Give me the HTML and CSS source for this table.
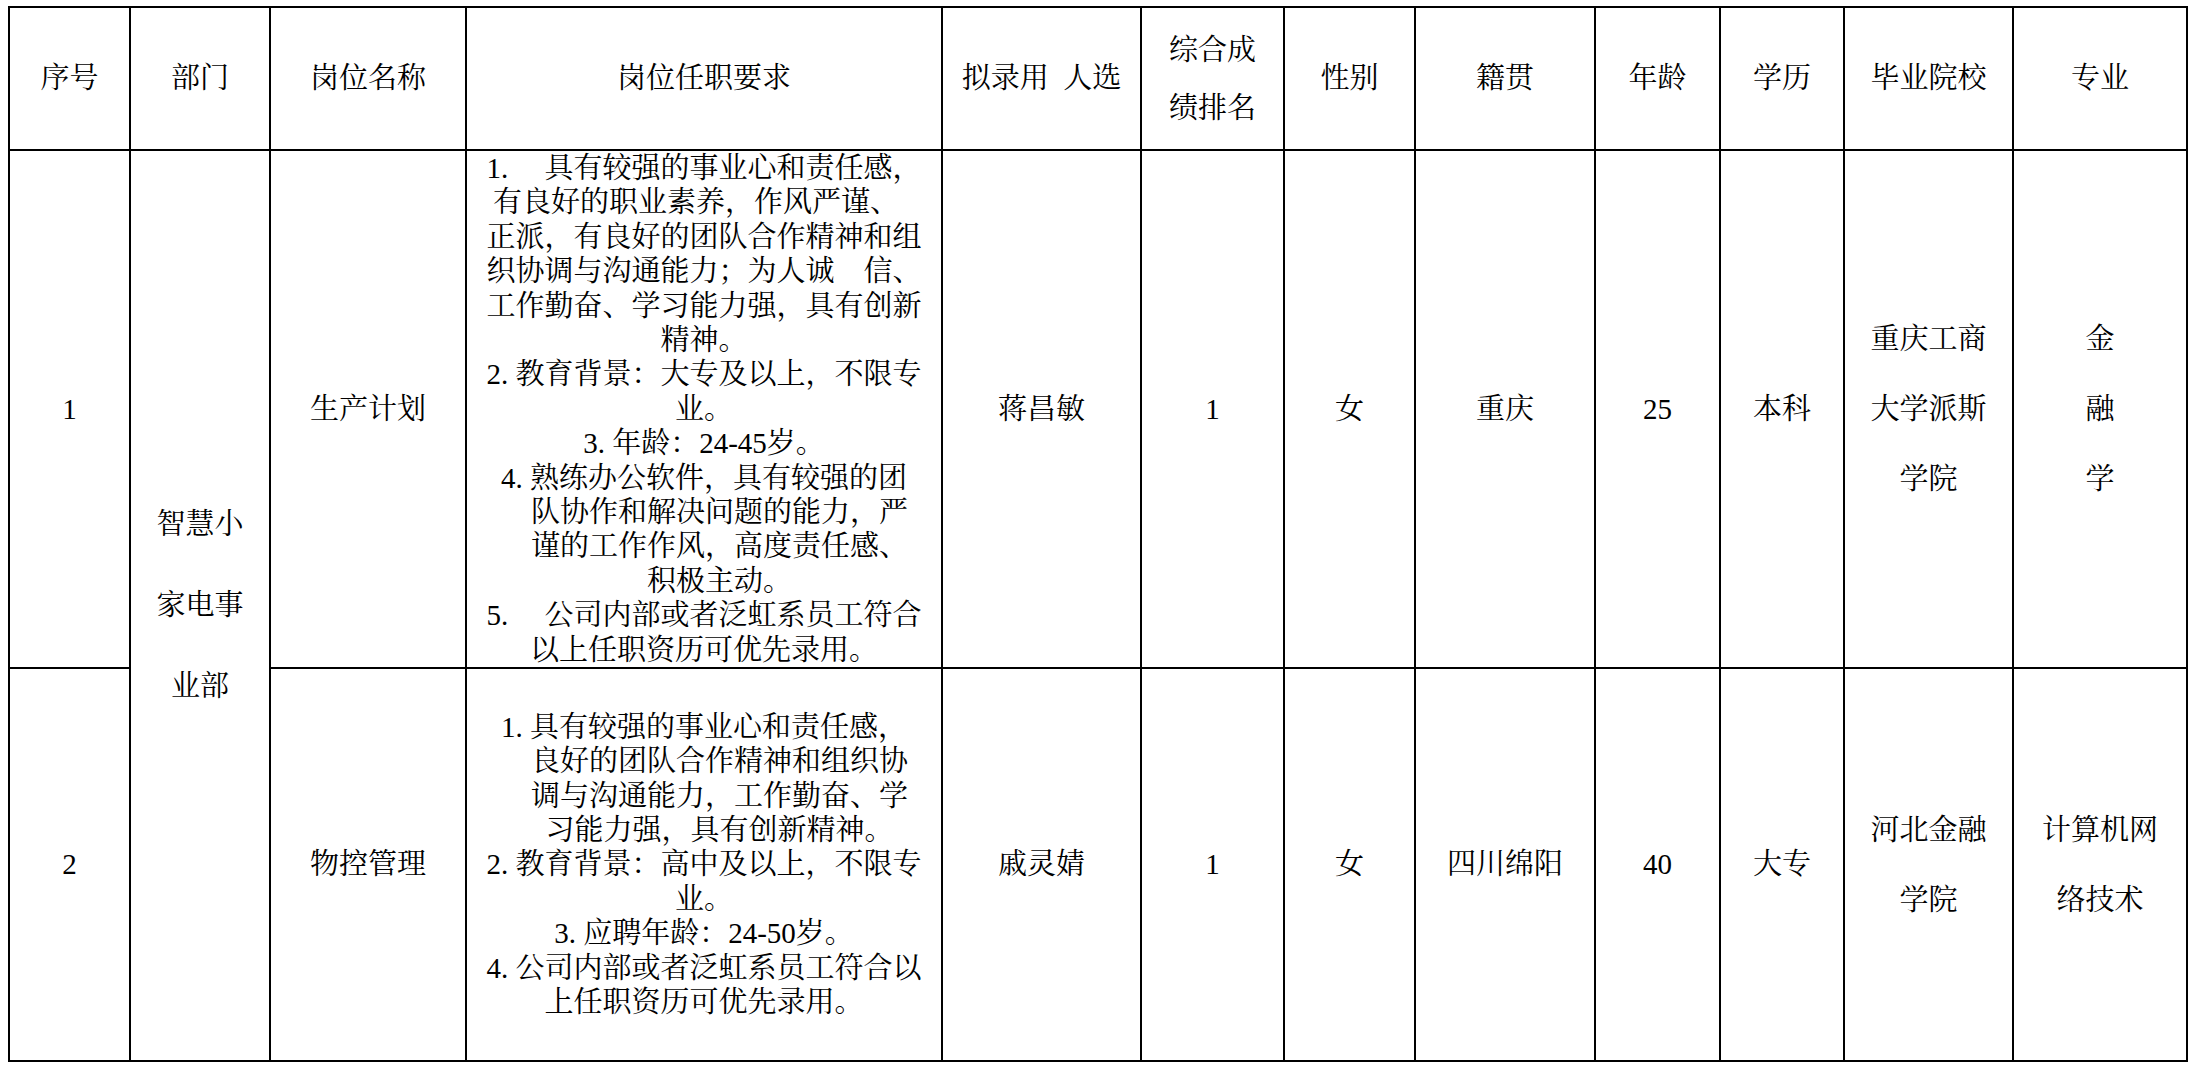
FILE: index.html
```html
<!DOCTYPE html>
<html lang="zh-CN">
<head>
<meta charset="utf-8">
<title>拟录用人选</title>
<link rel="stylesheet" href="styles.css">
</head>
<body>
<table class="roster">
  <colgroup>
    <col class="c-no">
    <col class="c-dept">
    <col class="c-post">
    <col class="c-req">
    <col class="c-name">
    <col class="c-rank">
    <col class="c-sex">
    <col class="c-origin">
    <col class="c-age">
    <col class="c-edu">
    <col class="c-school">
    <col class="c-major">
  </colgroup>
  <tr class="head">
    <td>序号</td>
    <td>部门</td>
    <td>岗位名称</td>
    <td>岗位任职要求</td>
    <td>拟录用&#8194;人选</td>
    <td class="rank-head">综合成<br>绩排名</td>
    <td>性别</td>
    <td>籍贯</td>
    <td>年龄</td>
    <td>学历</td>
    <td>毕业院校</td>
    <td>专业</td>
  </tr>
  <tr class="row-a">
    <td>1</td>
    <td rowspan="2" class="dept">智慧小<br>家电事<br>业部</td>
    <td>生产计划</td>
    <td class="req">
      <div class="ln">1. &#12288;具有较强的事业心和责任感，</div>
      <div class="ln out">有良好的职业素养，作风严谨、</div>
      <div class="ln">正派，有良好的团队合作精神和组</div>
      <div class="ln">织协调与沟通能力；为人诚&#12288;信、</div>
      <div class="ln">工作勤奋、学习能力强，具有创新</div>
      <div class="ln">精神。</div>
      <div class="ln">2. 教育背景：大专及以上，不限专</div>
      <div class="ln">业。</div>
      <div class="ln">3. 年龄：24-45岁。</div>
      <div class="ln">4. 熟练办公软件，具有较强的团</div>
      <div class="ln in">队协作和解决问题的能力，严</div>
      <div class="ln in">谨的工作作风，高度责任感、</div>
      <div class="ln in">积极主动。</div>
      <div class="ln">5. &#12288;公司内部或者泛虹系员工符合</div>
      <div class="ln">以上任职资历可优先录用。</div>
    </td>
    <td>蒋昌敏</td>
    <td>1</td>
    <td>女</td>
    <td>重庆</td>
    <td>25</td>
    <td>本科</td>
    <td class="multi">重庆工商<br>大学派斯<br>学院</td>
    <td class="multi">金<br>融<br>学</td>
  </tr>
  <tr class="row-b">
    <td>2</td>
    <td>物控管理</td>
    <td class="req">
      <div class="ln">1. 具有较强的事业心和责任感，</div>
      <div class="ln in">良好的团队合作精神和组织协</div>
      <div class="ln in">调与沟通能力，工作勤奋、学</div>
      <div class="ln in">习能力强，具有创新精神。</div>
      <div class="ln">2. 教育背景：高中及以上，不限专</div>
      <div class="ln">业。</div>
      <div class="ln">3. 应聘年龄：24-50岁。</div>
      <div class="ln">4. 公司内部或者泛虹系员工符合以</div>
      <div class="ln">上任职资历可优先录用。</div>
    </td>
    <td>戚灵婧</td>
    <td>1</td>
    <td>女</td>
    <td>四川绵阳</td>
    <td>40</td>
    <td>大专</td>
    <td class="multi">河北金融<br>学院</td>
    <td class="multi">计算机网<br>络技术</td>
  </tr>
</table>
</body>
</html>
```

FILE: styles.css
```css
html, body {
  background: #ffffff;
}

body {
  margin: 6px 8px;
  color: #000000;
  font-family: "Liberation Serif", "Noto Serif CJK SC", "Noto Sans CJK SC", serif;
}

.roster {
  border-collapse: collapse;
  table-layout: fixed;
  width: 2178px;
  font-size: 29px;
}

.c-no { width: 121px; }
.c-dept { width: 140px; }
.c-post { width: 196px; }
.c-req { width: 476px; }
.c-name { width: 199px; }
.c-rank { width: 143px; }
.c-sex { width: 131px; }
.c-origin { width: 180px; }
.c-age { width: 125px; }
.c-edu { width: 124px; }
.c-school { width: 169px; }
.c-major { width: 174px; }

.roster td {
  border: 2px solid #000000;
  padding: 0;
  text-align: center;
  vertical-align: middle;
  line-height: 34.4px;
  white-space: nowrap;
}

.head td {
  height: 141px;
}

.row-b td {
  height: 391px;
}

.roster td.rank-head {
  line-height: 58px;
}

.roster td.dept {
  line-height: 81px;
}

.roster td.multi {
  line-height: 70px;
}

.ln {
  text-align: center;
}

.ln.in {
  padding-left: 31px;
}

.ln.out {
  padding-right: 16px;
}
```
